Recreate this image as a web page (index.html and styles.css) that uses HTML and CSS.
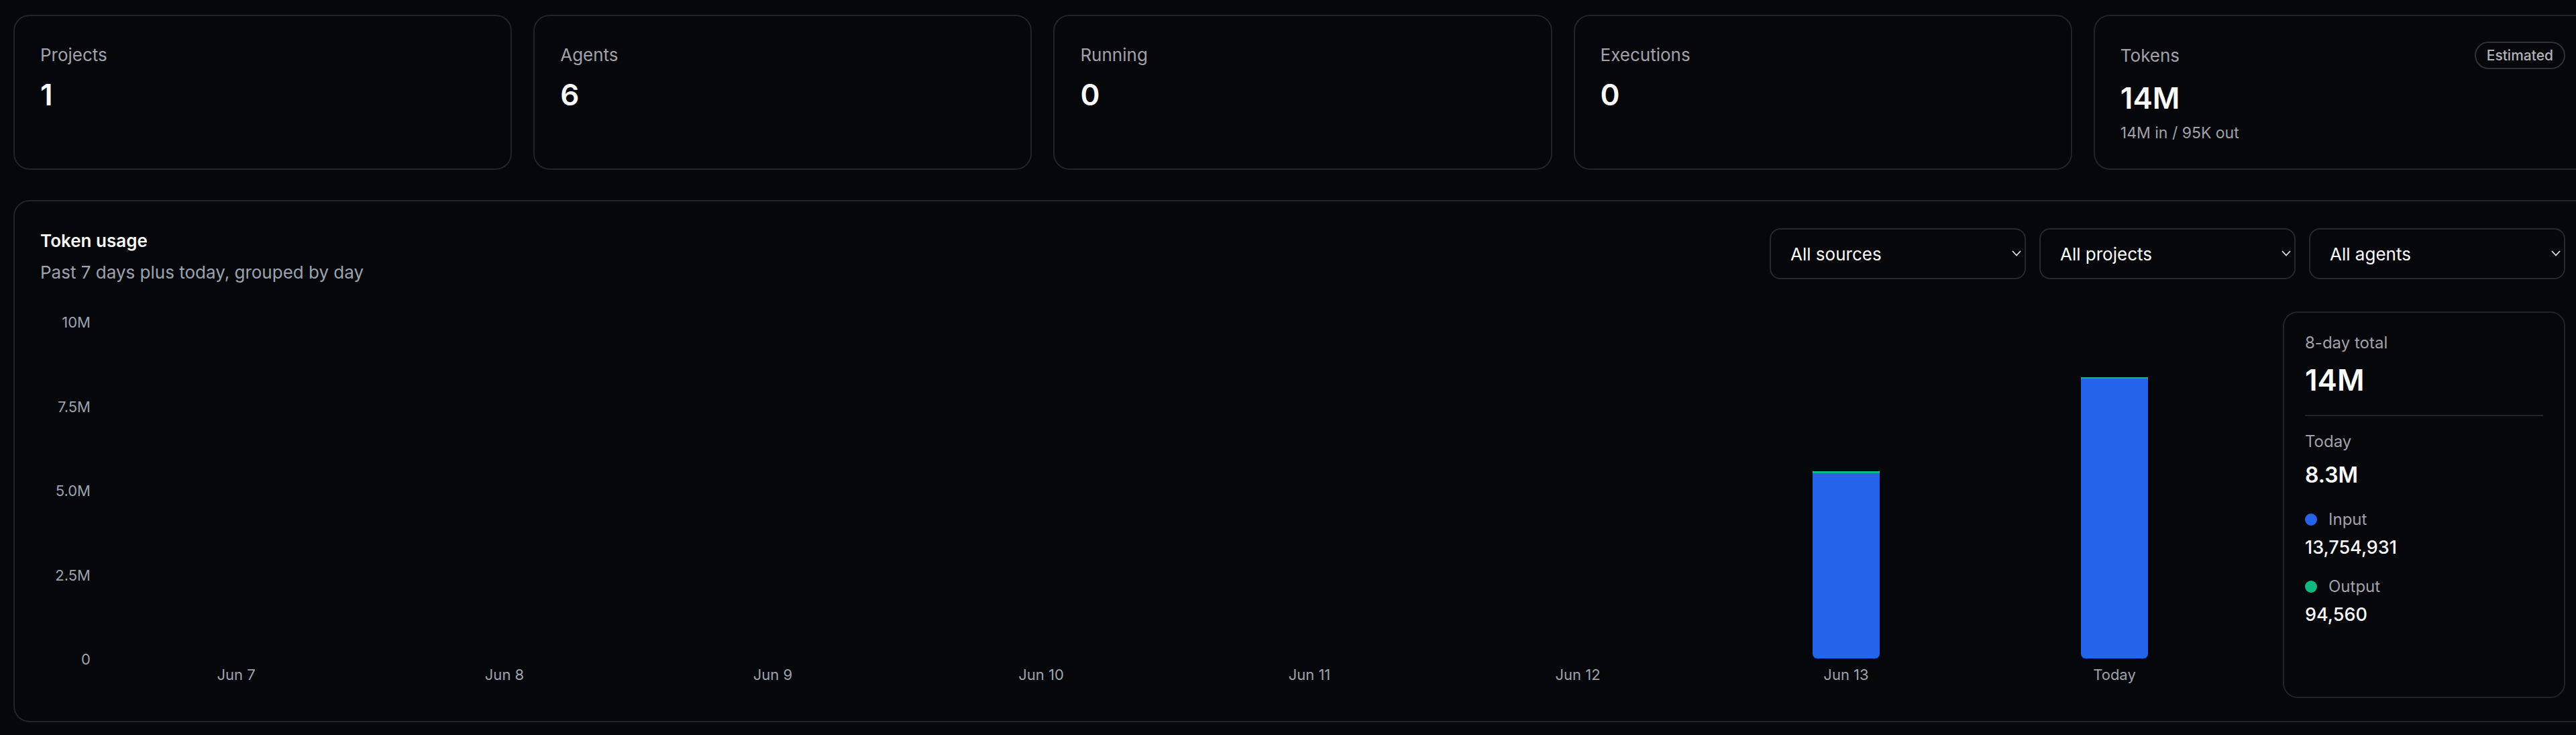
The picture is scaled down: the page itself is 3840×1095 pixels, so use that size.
FILE: index.html
```html
<!DOCTYPE html>
<html lang="en">
<head>
<meta charset="utf-8">
<title>Dashboard</title>
<link rel="stylesheet" href="styles.css">
</head>
<body>
<div class="page">
  <div class="stats">
    <div class="card">
      <div class="card-label">Projects</div>
      <div class="card-value">1</div>
    </div>
    <div class="card">
      <div class="card-label">Agents</div>
      <div class="card-value">6</div>
    </div>
    <div class="card">
      <div class="card-label">Running</div>
      <div class="card-value">0</div>
    </div>
    <div class="card">
      <div class="card-label">Executions</div>
      <div class="card-value">0</div>
    </div>
    <div class="card">
      <div class="card-head">
        <span class="card-label">Tokens</span>
        <span class="badge">Estimated</span>
      </div>
      <div class="card-value card-value-tight">14M</div>
      <div class="card-sub">14M in / 95K out</div>
    </div>
  </div>

  <section class="panel">
    <div class="panel-head">
      <div class="panel-titles">
        <h2 class="panel-title">Token usage</h2>
        <p class="panel-sub">Past 7 days plus today, grouped by day</p>
      </div>
      <div class="filters">
        <div class="select-wrap">
          <select class="select"><option>All sources</option></select>
          <svg class="chev" width="14" height="9" viewBox="0 0 14 9"><path d="M1.5 1.5 L7 7.5 L12.5 1.5" fill="none" stroke="#e4e4e7" stroke-width="1.8" stroke-linecap="round" stroke-linejoin="round"/></svg>
        </div>
        <div class="select-wrap">
          <select class="select"><option>All projects</option></select>
          <svg class="chev" width="14" height="9" viewBox="0 0 14 9"><path d="M1.5 1.5 L7 7.5 L12.5 1.5" fill="none" stroke="#e4e4e7" stroke-width="1.8" stroke-linecap="round" stroke-linejoin="round"/></svg>
        </div>
        <div class="select-wrap">
          <select class="select"><option>All agents</option></select>
          <svg class="chev" width="14" height="9" viewBox="0 0 14 9"><path d="M1.5 1.5 L7 7.5 L12.5 1.5" fill="none" stroke="#e4e4e7" stroke-width="1.8" stroke-linecap="round" stroke-linejoin="round"/></svg>
        </div>
      </div>
    </div>

    <div class="panel-body">
      <div class="chart">
        <div class="yaxis">
          <span>10M</span>
          <span>7.5M</span>
          <span>5.0M</span>
          <span>2.5M</span>
          <span>0</span>
        </div>
        <div class="plot">
          <div class="col"></div>
          <div class="col"></div>
          <div class="col"></div>
          <div class="col"></div>
          <div class="col"></div>
          <div class="col"></div>
          <div class="col">
            <div class="bar" style="height:55.6%">
              <div class="seg-out" style="height:3px"></div>
              <div class="seg-in"></div>
            </div>
          </div>
          <div class="col">
            <div class="bar" style="height:83.5%">
              <div class="seg-out" style="height:2px"></div>
              <div class="seg-in"></div>
            </div>
          </div>
        </div>
        <div class="xaxis">
          <span>Jun 7</span>
          <span>Jun 8</span>
          <span>Jun 9</span>
          <span>Jun 10</span>
          <span>Jun 11</span>
          <span>Jun 12</span>
          <span>Jun 13</span>
          <span>Today</span>
        </div>
      </div>

      <aside class="summary">
        <div class="sum-label">8-day total</div>
        <div class="sum-total">14M</div>
        <div class="sum-divider"></div>
        <div class="sum-label sum-today">Today</div>
        <div class="sum-today-value">8.3M</div>
        <div class="legend legend-input">
          <span class="dot dot-input"></span>
          <span class="legend-label">Input</span>
        </div>
        <div class="legend-value">13,754,931</div>
        <div class="legend legend-output">
          <span class="dot dot-output"></span>
          <span class="legend-label">Output</span>
        </div>
        <div class="legend-value">94,560</div>
      </aside>
    </div>
  </section>
</div>
</body>
</html>
```

FILE: styles.css
```css
* { box-sizing: border-box; }

html, body {
  margin: 0;
  padding: 0;
  overflow: hidden;
  background: #06070a;
}

body {
  font-family: Inter, "Noto Sans", "Liberation Sans", sans-serif;
  color: #fafafa;
}

.page {
  width: 3844px;
  padding: 22px 0 0 20px;
  box-sizing: content-box;
}

/* ---------- stat cards ---------- */
.stats {
  display: grid;
  grid-template-columns: repeat(5, 1fr);
  gap: 32px;
}

.card {
  border: 2px solid #222328;
  border-radius: 24px;
  padding: 40px 38px 38px;
  background: #06070a;
  display: flex;
  flex-direction: column;
}

.card-label {
  font-size: 26px;
  line-height: 36px;
  color: #a1a1aa;
}

.card-head {
  display: flex;
  align-items: center;
  justify-content: space-between;
  height: 41px;
  margin-top: -2px;
}

.badge {
  height: 41px;
  padding: 0 16px;
  border: 2px solid #303137;
  border-radius: 999px;
  font-size: 21px;
  font-weight: 500;
  line-height: 37px;
  color: #b4b4bc;
}

.card-value {
  margin-top: 16px;
  font-size: 44px;
  line-height: 50px;
  font-weight: 600;
  color: #fafafa;
}

.card-value-tight { margin-top: 18px; }

.card-sub {
  margin-top: 12px;
  font-size: 23px;
  line-height: 30px;
  color: #a1a1aa;
}

/* ---------- panel ---------- */
.panel {
  margin-top: 45px;
  border: 2px solid #222328;
  border-radius: 24px;
  padding: 40px 38px 34px;
}

.panel-head {
  display: flex;
  justify-content: space-between;
  align-items: flex-start;
}

.panel-title {
  margin: 0;
  font-size: 26px;
  line-height: 38px;
  font-weight: 600;
  color: #fafafa;
}

.panel-sub {
  margin: 10px 0 0;
  font-size: 26px;
  line-height: 36px;
  color: #9ca3af;
}

.filters {
  display: flex;
  gap: 20px;
}

.select-wrap {
  position: relative;
  width: 382px;
  height: 76px;
}

.select {
  appearance: none;
  -webkit-appearance: none;
  width: 100%;
  height: 100%;
  border: 2px solid #27282d;
  border-radius: 16px;
  background: #06070a;
  color: #fafafa;
  font-family: Inter, "Noto Sans", "Liberation Sans", sans-serif;
  font-size: 26px;
  padding: 0 40px 0 29px;
  outline: none;
}

.chev {
  position: absolute;
  right: 7px;
  top: 33px;
  pointer-events: none;
}

.panel-body {
  margin-top: 40px;
  display: flex;
  gap: 48px;
}

/* ---------- chart ---------- */
.chart {
  flex: 1;
  display: grid;
  grid-template-columns: 92px 1fr;
  grid-template-rows: 502px auto;
  padding-top: 16px;
  padding-right: 3px;
}

.yaxis {
  grid-row: 1;
  grid-column: 1;
  margin: -15px 0;
  padding-right: 17px;
  display: flex;
  flex-direction: column;
  justify-content: space-between;
  align-items: flex-end;
  font-size: 22px;
  line-height: 30px;
  color: #9ca3af;
}

.plot {
  grid-row: 1;
  grid-column: 2;
  display: flex;
}

.col {
  flex: 1;
  display: flex;
  justify-content: center;
  align-items: flex-end;
}

.bar {
  width: 100px;
  display: flex;
  flex-direction: column;
  margin-bottom: 1px;
}

.seg-out {
  background: #10b981;
  flex: none;
}

.seg-in {
  flex: 1;
  background: #2563eb;
  border-radius: 0 0 7px 7px;
}

.xaxis {
  grid-row: 2;
  grid-column: 2;
  display: flex;
  padding-top: 8px;
  font-size: 22px;
  line-height: 30px;
  color: #9ca3af;
}

.xaxis span {
  flex: 1;
  text-align: center;
}

/* ---------- summary ---------- */
.summary {
  width: 421px;
  flex: none;
  height: 576px;
  border: 2px solid #222328;
  border-radius: 22px;
  padding: 31px 31px;
}

.sum-label {
  font-size: 24px;
  line-height: 28px;
  color: #a1a1aa;
}

.sum-total {
  margin-top: 16px;
  font-size: 44px;
  line-height: 50px;
  font-weight: 600;
  color: #fafafa;
}

.sum-divider {
  margin-top: 27px;
  height: 2px;
  background: #222328;
}

.sum-today { margin-top: 24px; }

.sum-today-value {
  margin-top: 16px;
  font-size: 32px;
  line-height: 40px;
  font-weight: 600;
  color: #fafafa;
}

.legend {
  display: flex;
  align-items: center;
  gap: 17px;
  height: 28px;
}

.legend-input { margin-top: 32px; }
.legend-output { margin-top: 26px; }

.legend-label {
  font-size: 24px;
  line-height: 28px;
  color: #a1a1aa;
}

.dot {
  width: 18px;
  height: 18px;
  border-radius: 50%;
  flex: none;
}

.dot-input { background: #2563eb; }
.dot-output { background: #10b981; }

.legend-value {
  margin-top: 10px;
  font-size: 27px;
  line-height: 36px;
  font-weight: 500;
  color: #fafafa;
}
```
